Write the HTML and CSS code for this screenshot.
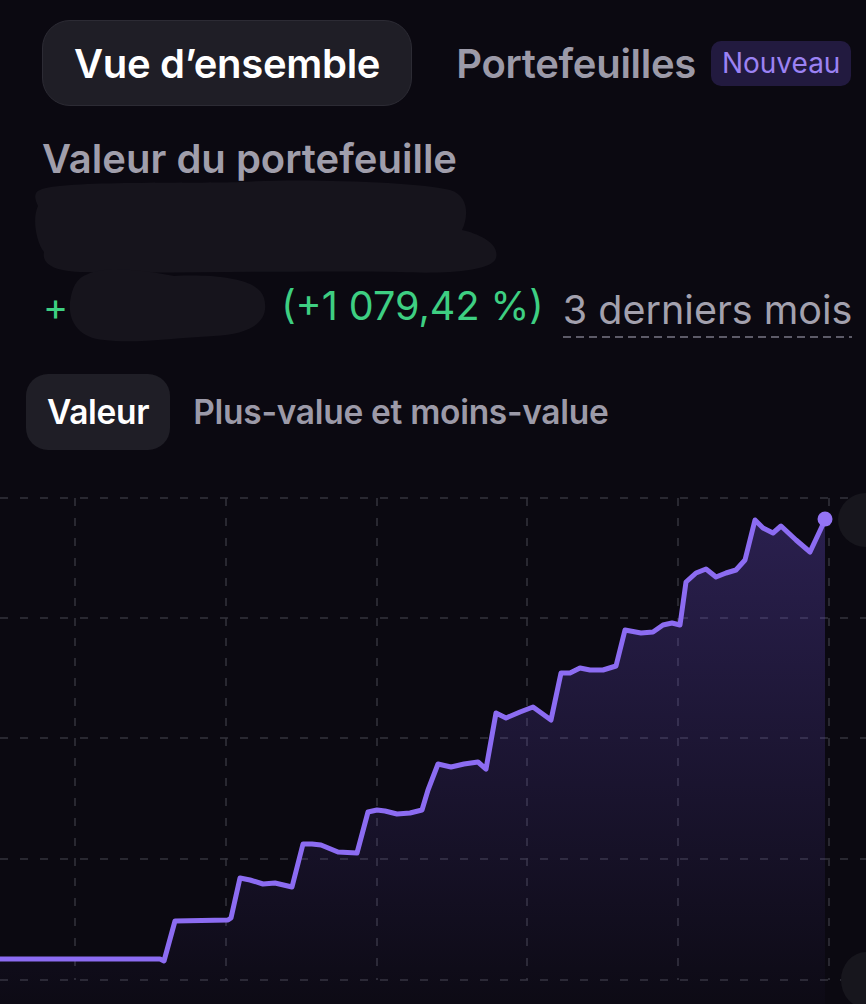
FILE: index.html
```html
<!DOCTYPE html>
<html lang="fr">
<head>
  <meta charset="UTF-8"/>
  <meta name="viewport" content="width=device-width, initial-scale=1.0"/>
  <title>Vue d'ensemble</title>
  <link rel="stylesheet" href="styles.css">
</head>
<body>
  <nav class="tabs">
    <div class="tab active">Vue d’ensemble</div>
    <div class="tab">Portefeuilles</div>
    <span class="badge">Nouveau</span>
  </nav>

  <section class="summary">
    <h2 class="summary-title">Valeur du portefeuille</h2>
    <svg class="redact-main" width="500" height="96" viewBox="0 0 500 96">
      <path d="M40 12 C 60 2, 200 6, 240 4 C 300 0, 420 4, 450 12 C 470 18, 468 40, 462 52 C 480 56, 500 66, 496 80 C 492 94, 440 96, 400 94 C 300 92, 180 96, 80 94 C 50 93, 42 84, 44 74 C 36 64, 32 40, 38 28 C 34 20, 34 14, 40 12 Z" fill="#16141c"/>
    </svg>
    <div class="change">
      <span class="plus">+</span>
      <svg class="redact-small" width="210" height="75" viewBox="0 0 210 75">
        <path d="M24 6 C 40 -2, 80 2, 110 8 C 150 6, 195 10, 200 30 C 206 52, 190 66, 150 68 C 110 70, 70 76, 40 72 C 14 70, 4 52, 6 34 C 8 20, 12 10, 24 6 Z" fill="#16141c"/>
      </svg>
      <span class="pct">(+1 079,42 %)</span>
      <span class="period">3 derniers mois</span>
    </div>
  </section>

  <nav class="chart-tabs">
    <div class="chart-tab active">Valeur</div>
    <div class="chart-tab">Plus-value et moins-value</div>
  </nav>

  <svg class="chart" width="866" height="534" viewBox="0 470 866 534">
    <defs>
      <linearGradient id="area" x1="0" y1="0" x2="0" y2="1">
        <stop offset="0" stop-color="#6b4fd0" stop-opacity="0.32"/>
        <stop offset="1" stop-color="#6b4fd0" stop-opacity="0.02"/>
      </linearGradient>
    </defs>
    <g class="grid">
      <line x1="0" y1="498" x2="866" y2="498"/>
      <line x1="0" y1="618" x2="866" y2="618"/>
      <line x1="0" y1="738" x2="866" y2="738"/>
      <line x1="0" y1="859" x2="866" y2="859"/>
      <line x1="0" y1="980" x2="866" y2="980"/>
      <line x1="75" y1="498" x2="75" y2="980"/>
      <line x1="226" y1="498" x2="226" y2="980"/>
      <line x1="377" y1="498" x2="377" y2="980"/>
      <line x1="527" y1="498" x2="527" y2="980"/>
      <line x1="678" y1="498" x2="678" y2="980"/>
      <line x1="829" y1="498" x2="829" y2="980"/>
    </g>
    <path class="area" d="M0 959 L160 959 L164 961 L175 921 L228 920 L231 918 L240 878 L250 880 L263 884 L275 883 L292 887 L303 844 L312 844 L321 845 L338 852 L357 853 L368 812 L377 810 L385 811 L397 814 L410 813 L422 810 L428 790 L438 764 L451 767 L464 764 L478 762 L486 769 L496 713 L506 718 L520 712 L533 707 L551 720 L561 673 L570 673 L580 668 L590 670 L603 670 L616 666 L625 630 L641 633 L653 632 L663 625 L672 623 L680 625 L686 582 L696 573 L706 569 L716 577 L726 573 L736 570 L745 560 L755 520 L763 528 L773 533 L781 526 L796 540 L810 552 L825 520 L825 1004 L0 1004 Z"/>
    <path class="line" d="M0 959 L160 959 L164 961 L175 921 L228 920 L231 918 L240 878 L250 880 L263 884 L275 883 L292 887 L303 844 L312 844 L321 845 L338 852 L357 853 L368 812 L377 810 L385 811 L397 814 L410 813 L422 810 L428 790 L438 764 L451 767 L464 764 L478 762 L486 769 L496 713 L506 718 L520 712 L533 707 L551 720 L561 673 L570 673 L580 668 L590 670 L603 670 L616 666 L625 630 L641 633 L653 632 L663 625 L672 623 L680 625 L686 582 L696 573 L706 569 L716 577 L726 573 L736 570 L745 560 L755 520 L763 528 L773 533 L781 526 L796 540 L810 552 L825 520"/>
    <circle cx="825" cy="519" r="7.5" fill="#9474f5"/>
    <!-- scribbles at the edge -->
    <ellipse cx="866" cy="520" rx="28" ry="27" fill="#17161d"/>
    <ellipse cx="866" cy="980" rx="25" ry="28" fill="#17161d"/>
  </svg>
</body>
</html>
```

FILE: styles.css
```css
body { margin: 0; background: #0b0911; font-family: Inter, "Noto Sans", sans-serif; color: #fff; overflow: hidden; }

.tabs { display: flex; align-items: center; padding: 20px 0 0 42px; white-space: nowrap; }
.tab { font-size: 40px; font-weight: 600; color: #9c9aa8; letter-spacing: -0.3px; }
.tab.active { color: #fff; background: #1f1e26; border: 1.5px solid #2c2b34; border-radius: 28px; height: 84px; padding: 0 31px; display: flex; align-items: center; margin-right: 44px; }
.badge { margin-left: 15px; background: #221a3f; color: #9b82f3; font-size: 28px; border-radius: 10px; padding: 0 11px; height: 45px; display: flex; align-items: center; }

.summary { padding: 30px 0 0 0; }
.summary-title { margin: 0 0 0 42px; font-size: 40px; font-weight: 600; color: #a09eab; line-height: 46px; letter-spacing: 0; }
.redact-main { display: block; margin-top: -4px; }

.change { display: flex; align-items: center; margin-top: -6px; white-space: nowrap; }
.change > * { flex-shrink: 0; }
.plus { color: #3ecf82; font-size: 38px; margin-left: 43px; }
.redact-small { display: block; margin-left: -4px; }
.pct { color: #3ecf82; font-size: 39.5px; margin-left: 7px; letter-spacing: 0; }
.period { color: #a3a1ae; font-size: 39.5px; margin-left: 19px; padding-bottom: 4px; margin-top: 12px;
  background-image: linear-gradient(to right, #5d5b68 60%, transparent 60%); background-size: 13px 2px; background-repeat: repeat-x; background-position: 0 100%; }

.chart-tabs { display: flex; align-items: center; gap: 23px; padding: 31px 0 0 26px; }
.chart-tab { font-size: 33.5px; font-weight: 600; color: #9c9aa8; letter-spacing: -0.3px; }
.chart-tab.active { color: #fff; background: #1f1e26; border-radius: 22px; height: 76px; padding: 0 21px; display: flex; align-items: center; }

.chart { display: block; margin-top: 20px; }
.grid line { stroke: #35333d; stroke-width: 1.5; stroke-dasharray: 8 12; }
.area { fill: url(#area); }
.line { fill: none; stroke: #8c6cf2; stroke-width: 5; stroke-linejoin: round; stroke-linecap: round; }
```
